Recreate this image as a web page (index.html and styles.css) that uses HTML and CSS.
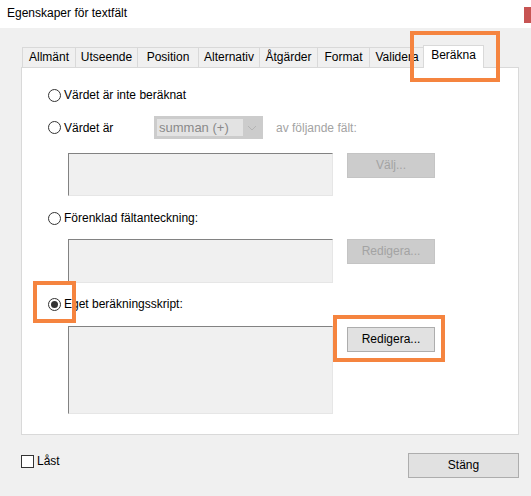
FILE: index.html
```html
<!DOCTYPE html>
<html lang="sv">
<head>
<meta charset="utf-8">
<title>Egenskaper för textfält</title>
<link rel="stylesheet" href="styles.css">
</head>
<body>
<div class="titlebar">
  <span class="title">Egenskaper för textfält</span>
  <span class="close-edge"></span>
</div>
<div class="dialog">
  <div class="tabs">
    <div class="tab w-allm">Allmänt</div>
    <div class="tab w-uts">Utseende</div>
    <div class="tab w-pos">Position</div>
    <div class="tab w-alt">Alternativ</div>
    <div class="tab w-atg">Åtgärder</div>
    <div class="tab w-fmt">Format</div>
    <div class="tab w-val">Validera</div>
    <div class="tab active w-ber">Beräkna</div>
  </div>
  <div class="panel">
    <div class="row r1">
      <span class="radio"></span><span class="label">Värdet är inte beräknat</span>
    </div>
    <div class="row r2">
      <span class="radio"></span><span class="label l-wide">Värdet är</span>
      <div class="select">
        <span class="select-text">summan (+)</span>
        <span class="select-arrow">
          <svg width="10" height="6" viewBox="0 0 10 6"><path d="M1 1 L5 5 L9 1" fill="none" stroke="#b4b4b4" stroke-width="1"/></svg>
        </span>
      </div>
      <span class="dim">av följande fält:</span>
    </div>
    <div class="field-row f1">
      <div class="textarea h1"></div>
      <div class="btn disabled">Välj...</div>
    </div>
    <div class="row r3">
      <span class="radio"></span><span class="label">Förenklad fältanteckning:</span>
    </div>
    <div class="field-row f2">
      <div class="textarea h2"></div>
      <div class="btn disabled">Redigera...</div>
    </div>
    <div class="row r4">
      <span class="radio checked"></span><span class="label">Eget beräkningsskript:</span>
    </div>
    <div class="field-row f3">
      <div class="textarea h3"></div>
      <div class="btn">Redigera...</div>
    </div>
  </div>
  <div class="footer">
    <label class="check"><span class="box"></span><span>Låst</span></label>
    <div class="btn close-btn">Stäng</div>
  </div>
</div>
<div class="mark mark-tab"></div>
<div class="mark mark-radio"></div>
<div class="mark mark-btn"></div>
</body>
</html>
```
FILE: styles.css
```css
* { box-sizing: border-box; }
html, body { margin: 0; padding: 0; }
body {
  width: 531px;
  height: 496px;
  background: #f0f0f0;
  font-family: "Liberation Sans", Arial, sans-serif;
  font-size: 12px;
  color: #000;
  position: relative;
  overflow: hidden;
}
.titlebar {
  height: 28px;
  background: #fff;
  display: flex;
  align-items: flex-start;
}
.title {
  padding-left: 7px;
  line-height: 14px;
  margin-top: 6px;
}
.close-edge {
  margin-left: auto;
  margin-top: 7px;
  width: 7px;
  height: 16px;
  background: #c75453;
}
.dialog {
  padding: 17px 0 0 21px;
}
.tabs {
  display: flex;
  align-items: flex-end;
  height: 22px;
  padding-left: 1px;
}
.tab {
  height: 20px;
  border-top: 1px solid #d9d9d9;
  border-left: 1px solid #d9d9d9;
  background: #f0f0f0;
  text-align: center;
  line-height: 19px;
  white-space: nowrap;
}
.w-allm { width: 53px; }
.w-uts { width: 62px; }
.w-pos { width: 61px; }
.w-alt { width: 61px; }
.w-atg { width: 58px; }
.w-fmt { width: 52px; }
.w-val { width: 56px; border-right: 1px solid #d9d9d9; }
.tab.active {
  width: 61px;
  height: 23px;
  margin-left: -2px;
  margin-bottom: -1px;
  background: #fff;
  border: 1px solid #d9d9d9;
  border-bottom: none;
  line-height: 19px;
  position: relative;
  z-index: 1;
}
.panel {
  width: 498px;
  height: 368px;
  background: #fff;
  border: 1px solid #d9d9d9;
  padding: 19px 0 0 26px;
}
.row {
  display: flex;
  align-items: center;
  height: 16px;
}
.radio {
  width: 13px;
  height: 13px;
  border: 1px solid #333;
  border-radius: 50%;
  background: #fff;
  display: flex;
  align-items: center;
  justify-content: center;
  flex-shrink: 0;
}
.radio.checked::after {
  content: "";
  width: 7px;
  height: 7px;
  border-radius: 50%;
  background: #333;
}
.label { margin-left: 3px; }
.l-wide { width: 90px; }
.r2 { margin-top: 13px; height: 23px; }
.select {
  width: 109px;
  height: 23px;
  background: #cccccc;
  display: flex;
  align-items: center;
  padding: 3px;
}
.select-text {
  width: 86px;
  height: 17px;
  background: #e3e3e3;
  color: #8a8a8a;
  font-size: 13px;
  line-height: 17px;
  padding-left: 2px;
  white-space: nowrap;
}
.select-arrow {
  flex: 1;
  display: flex;
  justify-content: center;
  align-items: center;
}
.dim {
  color: #a3a3a3;
  margin-left: 13px;
}
.field-row {
  display: flex;
  align-items: flex-start;
  margin-left: 20px;
  gap: 14px;
}
.f1 { margin-top: 14px; }
.f2 { margin-top: 13px; }
.f3 { margin-top: 14px; }
.r3 { margin-top: 14px; }
.r4 { margin-top: 13px; }
.textarea {
  width: 265px;
  background: #f0f0f0;
  border-top: 1px solid #828282;
  border-left: 1px solid #828282;
  border-right: 1px solid #e6e6e6;
  border-bottom: 1px solid #e6e6e6;
}
.h1 { height: 43px; }
.h2 { height: 44px; }
.h3 { height: 88px; }
.btn {
  width: 88px;
  height: 25px;
  background: #e1e1e1;
  border: 1px solid #adadad;
  text-align: center;
  line-height: 23px;
  color: #000;
}
.f3 .btn { margin-top: 1px; }
.btn.disabled {
  background: #cccccc;
  border-color: #c4c4c4;
  color: #a3a3a3;
}
.footer {
  display: flex;
  justify-content: space-between;
  align-items: flex-start;
  margin-top: 18px;
  padding-right: 12px;
}
.check {
  display: flex;
  align-items: center;
  margin-top: 1px;
  height: 14px;
}
.box {
  width: 13px;
  height: 13px;
  border: 1px solid #333;
  background: #fff;
  margin-right: 3px;
}
.close-btn {
  width: 111px;
  height: 25px;
}
.mark {
  position: absolute;
  border: 4px solid #f5843f;
  pointer-events: none;
  z-index: 5;
}
.mark-tab { left: 410px; top: 31px; width: 90px; height: 51px; }
.mark-radio { left: 33px; top: 281px; width: 43px; height: 42px; }
.mark-btn { left: 333px; top: 315px; width: 112px; height: 47px; }
```
